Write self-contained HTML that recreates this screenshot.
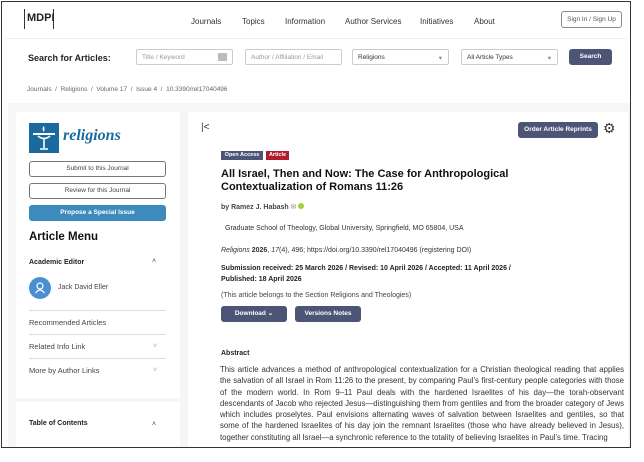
<!DOCTYPE html>
<html><head><meta charset="utf-8"><style>
*{margin:0;padding:0;box-sizing:border-box}
body{width:644px;height:462px;background:#fff;font-family:"Liberation Sans",Arial,sans-serif;color:#222;position:relative;overflow:hidden}
.frame{position:absolute;left:1px;top:1px;width:630px;height:447px;border:1px solid #333;background:#fff;overflow:hidden}
.a{position:absolute;white-space:nowrap}
.nav{font-size:8px;color:#333;top:15px}
.inp{position:absolute;top:47px;height:16px;border:1px solid #ccc;border-radius:2px;font-size:6.5px;color:#999;padding:4px 5px;background:#fff;white-space:nowrap;overflow:hidden}
.gray{position:absolute;left:6px;top:101px;width:622px;height:344px;background:#f6f6f6}
.card{position:absolute;background:#fff}
.btn{position:absolute;left:27px;width:137px;height:16px;border:1px solid #777;border-radius:3px;font-size:6.5px;text-align:center;line-height:14px;color:#444;background:#fff}
.dk{position:absolute;background:#4d5577;color:#fff;font-size:7px;font-weight:bold;text-align:center;border-radius:3px}
.hr{position:absolute;left:27px;width:137px;height:1px;background:#ddd}
.side{font-size:7.5px;color:#444}
.chev{position:absolute;font-size:7px;color:#aaa}
p.abs{position:absolute;left:218px;top:362px;width:404px;font-size:7.8px;line-height:11.3px;color:#333;text-align:justify}
</style></head><body>
<div class="frame">
<div class="a" style="left:22px;top:7px;width:30px;height:20px;font-weight:bold;font-size:11px;color:#222;border:1.5px solid #333;border-top:none;border-bottom:none;padding:3px 2px 0">MDPI</div>
<div class="a nav" style="left:189px">Journals</div>
<div class="a nav" style="left:240px">Topics</div>
<div class="a nav" style="left:283px">Information</div>
<div class="a nav" style="left:343px">Author Services</div>
<div class="a nav" style="left:418px">Initiatives</div>
<div class="a nav" style="left:472px">About</div>
<div class="a" style="left:559px;top:9px;width:61px;height:17px;border:1px solid #889;border-radius:3px;font-size:6.5px;text-align:center;line-height:15px;color:#555">Sign In / Sign Up</div>
<div class="a" style="left:3px;top:36px;width:622px;height:1px;background:#f0f0f0"></div>
<div class="a" style="left:26px;top:51px;font-size:9px;font-weight:bold;color:#222">Search for Articles:</div>
<div class="inp" style="left:134px;width:97px">Title / Keyword<span style="position:absolute;right:5px;top:3px;width:9px;height:8px;background:#bbb;border-radius:1px"></span></div>
<div class="inp" style="left:243px;width:97px">Author / Affiliation / Email</div>
<div class="inp" style="left:350px;width:97px;color:#333">Religions<span style="position:absolute;right:6px;color:#888">▾</span></div>
<div class="inp" style="left:459px;width:97px;color:#333">All Article Types<span style="position:absolute;right:6px;color:#888">▾</span></div>
<div class="dk" style="left:567px;top:47px;width:43px;height:16px;line-height:16px;font-size:6.5px">Search</div>
<div class="a" style="left:25px;top:84px;font-size:6.5px;color:#666">Journals &nbsp;/&nbsp; Religions &nbsp;/&nbsp; Volume 17 &nbsp;/&nbsp; Issue 4 &nbsp;/&nbsp; 10.3390/rel17040496</div>

<div class="gray"></div>
<div class="card" style="left:14px;top:110px;width:164px;height:286px"></div>
<div class="card" style="left:14px;top:400px;width:164px;height:46px"></div>
<div class="card" style="left:186px;top:110px;width:440px;height:335px"></div>

<div class="a" style="left:27px;top:121px;width:30px;height:30px;background:#1a6aa0">
<svg width="30" height="30" viewBox="0 0 30 30"><path d="M4 11h22" stroke="#fff" stroke-width="2"/><path d="M9 13q6 5 12 0" stroke="#fff" stroke-width="1.6" fill="none"/><path d="M15 16v9M11 26h8" stroke="#fff" stroke-width="1.6"/><path d="M15 9q-3-3 0-6q1 3 0 6" fill="#fff"/></svg></div>
<div class="a" style="left:61px;top:125px;font-family:'Liberation Serif',serif;font-style:italic;font-weight:bold;font-size:16px;color:#1a6aa0">religions</div>
<div class="btn" style="top:159px">Submit to this Journal</div>
<div class="btn" style="top:181px">Review for this Journal</div>
<div class="btn" style="top:203px;background:#3d8bbd;border-color:#3d8bbd;color:#fff;font-weight:bold">Propose a Special Issue</div>
<div class="a" style="left:27px;top:229px;font-size:11.5px;font-weight:bold;color:#111">Article Menu</div>
<div class="a" style="left:27px;top:257px;font-size:7px;font-weight:bold;color:#222">Academic Editor</div>
<div class="chev" style="left:150px;top:256px;color:#444">˄</div>
<div class="a" style="left:27px;top:275px;width:22px;height:22px;border-radius:50%;background:#4a90d0">
<svg width="22" height="22"><circle cx="11" cy="9" r="3" fill="none" stroke="#fff" stroke-width="1.2"/><path d="M6.5 16q4.5-6 9 0" fill="none" stroke="#fff" stroke-width="1.2"/></svg></div>
<div class="a side" style="left:56px;top:282px;font-size:7px">Jack David Eller</div>
<div class="hr" style="top:308px"></div>
<div class="a side" style="left:27px;top:316px">Recommended Articles</div>
<div class="hr" style="top:332px"></div>
<div class="a side" style="left:27px;top:340px">Related Info Link</div>
<div class="chev" style="left:151px;top:341px">˅</div>
<div class="hr" style="top:356px"></div>
<div class="a side" style="left:27px;top:364px">More by Author Links</div>
<div class="chev" style="left:151px;top:365px">˅</div>
<div class="a" style="left:27px;top:418px;font-size:7px;font-weight:bold;color:#222">Table of Contents</div>
<div class="chev" style="left:150px;top:419px;color:#444">˄</div>

<div class="a" style="left:199px;top:120px;font-size:10px;color:#333">|&lt;</div>
<div class="dk" style="left:516px;top:120px;width:80px;height:16px;line-height:16px;font-size:6.5px">Order Article Reprints</div>
<div class="a" style="left:601px;top:118px;font-size:14px;color:#333">⚙</div>
<div class="dk" style="left:219px;top:149px;width:42px;height:9px;line-height:9px;font-size:5.5px;border-radius:0">Open Access</div>
<div class="dk" style="left:264px;top:149px;width:23px;height:9px;line-height:9px;font-size:5.5px;border-radius:0;background:#b01c2e">Article</div>
<div class="a" style="left:219px;top:166px;font-size:11px;font-weight:bold;line-height:13px;color:#111">All Israel, Then and Now: The Case for Anthropological<br>Contextualization of Romans 11:26</div>
<div class="a" style="left:219px;top:201px;font-size:7px;font-weight:bold;color:#444">by Ramez J. Habash <span style="font-weight:normal;color:#888">✉</span><span style="display:inline-block;width:6px;height:6px;border-radius:50%;background:#a6ce39;margin-left:1px"></span></div>
<div class="a" style="left:223px;top:223px;font-size:7px;color:#333">Graduate School of Theology, Global University, Springfield, MO 65804, USA</div>
<div class="a" style="left:219px;top:245px;font-size:7px;color:#333"><i>Religions</i> <b>2026</b>, <i>17</i>(4), 496; https://doi.org/10.3390/rel17040496 (registering DOI)</div>
<div class="a" style="left:219px;top:261px;font-size:7px;font-weight:bold;line-height:11px;color:#222">Submission received: 25 March 2026 / Revised: 10 April 2026 / Accepted: 11 April 2026 /<br>Published: 18 April 2026</div>
<div class="a" style="left:219px;top:290px;font-size:7px;color:#444">(This article belongs to the Section Religions and Theologies)</div>
<div class="dk" style="left:219px;top:304px;width:66px;height:16px;line-height:16px;font-size:6.5px">Download ⌄</div>
<div class="dk" style="left:293px;top:304px;width:66px;height:16px;line-height:16px;font-size:6.5px">Versions Notes</div>
<div class="a" style="left:219px;top:348px;font-size:7px;font-weight:bold;color:#222">Abstract</div>
<p class="abs">This article advances a method of anthropological contextualization for a Christian theological reading that applies the salvation of all Israel in Rom 11:26 to the present, by comparing Paul’s first-century people categories with those of the modern world. In Rom 9–11 Paul deals with the hardened Israelites of his day—the torah-observant descendants of Jacob who rejected Jesus—distinguishing them from gentiles and from the broader category of Jews which includes proselytes. Paul envisions alternating waves of salvation between Israelites and gentiles, so that some of the hardened Israelites of his day join the remnant Israelites (those who have already believed in Jesus), together constituting all Israel—a synchronic reference to the totality of believing Israelites in Paul’s time. Tracing</p>
</div>
</body></html>
